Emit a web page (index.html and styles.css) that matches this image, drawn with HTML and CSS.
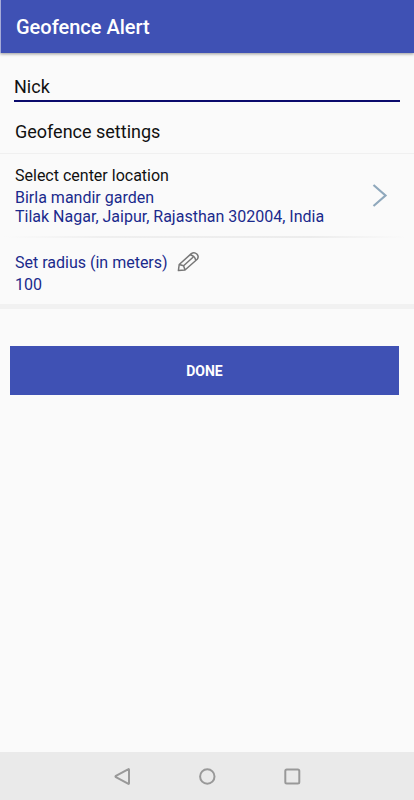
FILE: index.html
```html
<!DOCTYPE html>
<html lang="en">
<head>
<meta charset="utf-8">
<meta name="viewport" content="width=device-width, initial-scale=1">
<title>Geofence Alert</title>
<link rel="stylesheet" href="styles.css">
</head>
<body>
<header class="app-bar"><h1>Geofence Alert</h1></header>
<main class="content">
  <div class="name-field"><input type="text" aria-label="Name" value="Nick"></div>
  <h2 class="section-title">Geofence settings</h2>
  <button type="button" class="row location">
    <span class="row-text">
      <span class="row-label">Select center location</span>
      <span class="row-value">Birla mandir garden</span>
      <span class="row-value">Tilak Nagar, Jaipur, Rajasthan 302004, India</span>
    </span>
    <svg class="chevron" width="16" height="24" viewBox="0 0 16 24" aria-hidden="true"><path d="M1.5 1 13.5 11.5 1.5 22" /></svg>
  </button>
  <div class="divider"></div>
  <button type="button" class="row radius">
    <span class="row-text">
      <span class="radius-label">Set radius (in meters)
        <svg class="pencil" width="22" height="22" viewBox="0 0 22 22" aria-hidden="true"><path d="M1.4 18.6 2.2 12.5 14.3 1.6Q17.2-.4 19.8 2 22.3 4.6 20.2 7.2L8 18ZM2.2 12.5 6.6 13.8 8 18M13.2 2.8Q17.6 3.8 18.8 8.2M6.6 13.8 16 5.2" /></svg>
      </span>
      <span class="radius-value">100</span>
    </span>
  </button>
  <div class="actions"><button type="button" class="done">DONE</button></div>
</main>
<nav class="system-nav" aria-label="System">
  <button type="button" aria-label="Back"><svg width="18" height="18" viewBox="0 0 18 18"><path d="M16 2.7V16.3Q16 17.3 15 16.7L2.9 10.2Q2 9.5 2.9 8.8L15 2.3Q16 1.7 16 2.7Z" /></svg></button>
  <button type="button" aria-label="Home"><svg width="18" height="18" viewBox="0 0 18 18"><circle cx="9.3" cy="9.5" r="7.2" /></svg></button>
  <button type="button" aria-label="Recent apps"><svg width="18" height="18" viewBox="0 0 18 18"><rect x="2.3" y="2.5" width="14" height="14" rx="1.5" /></svg></button>
</nav>
</body>
</html>
```

FILE: styles.css
```css
* {
  box-sizing: border-box;
}

body {
  margin: 0;
  min-height: 100vh;
  display: flex;
  flex-direction: column;
  background: #fafafa;
  color: #111;
  font-family: Roboto, "Liberation Sans", sans-serif;
}

h1, h2 {
  margin: 0;
}

button, input {
  font: inherit;
  border: 0;
  border-radius: 0;
  background: none;
}

.app-bar {
  padding: 15px 15px 14px;
  border-left: 1px solid #a5abd8;
  background: #3f51b4;
  color: #fff;
  box-shadow: 0 1px 3px rgba(0, 0, 0, 0.4);
}

.app-bar h1 {
  font-size: 20px;
  line-height: 24px;
  font-weight: 500;
}

.content {
  flex: 1;
}

.name-field {
  padding: 19px 14px 0;
}

.name-field input {
  display: block;
  width: 100%;
  height: 30px;
  padding: 0;
  border-bottom: 2px solid #0a0a6c;
  color: #111;
  font-size: 18px;
  outline: none;
}

.section-title {
  padding: 18px 15px 9px;
  border-bottom: 1px solid #f0f0f0;
  font-size: 18px;
  line-height: 24px;
  font-weight: 400;
}

.row {
  display: flex;
  align-items: center;
  justify-content: space-between;
  width: 100%;
  padding: 11px 26px 10px 15px;
  text-align: left;
  font-size: 16px;
  line-height: 19px;
  color: #1a2a8c;
}

.row-text, .row-value {
  display: block;
}

.row-label {
  display: block;
  padding-bottom: 1px;
  line-height: 22px;
  color: #111;
}

.chevron {
  fill: none;
  stroke: #8fa8bc;
  stroke-width: 2.2;
}

.divider {
  height: 2px;
  background: linear-gradient(90deg, #fafafa 1%, #efefef 25%, #ececec 75%, #fafafa 98%);
}

.radius {
  padding: 14px 15px 8px;
  border-bottom: 5px solid #f1f1f1;
  line-height: 22px;
}

.radius-label {
  display: flex;
  align-items: center;
  gap: 9px;
}

.radius-value {
  display: block;
}

.pencil {
  overflow: visible;
  fill: none;
  stroke: #777;
  stroke-width: 1.5;
  stroke-linejoin: round;
}

.actions {
  padding: 37px 15px 37px 10px;
}

.done {
  display: block;
  width: 100%;
  height: 49px;
  background: #3f51b4;
  color: #fff;
  font-size: 14px;
  font-weight: 700;
}

.system-nav {
  display: flex;
  justify-content: center;
  gap: 67px;
  height: 48px;
  background: #eaeaea;
}

.system-nav button {
  display: flex;
  align-items: center;
  padding: 0;
}

.system-nav svg {
  fill: none;
  stroke: #999;
  stroke-width: 2;
  stroke-linejoin: round;
}
```
